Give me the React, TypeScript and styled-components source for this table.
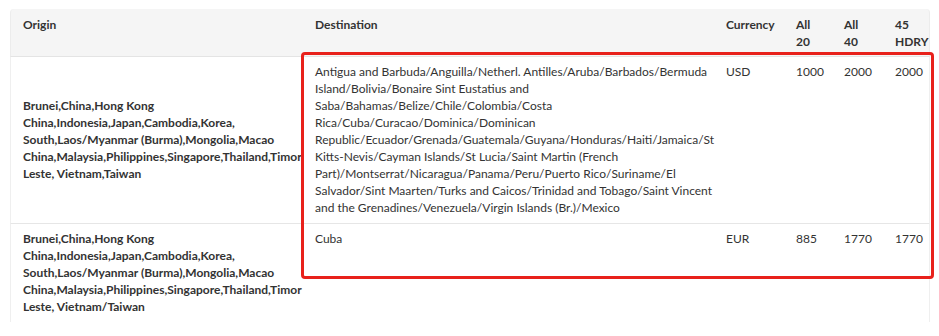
import React from "react";
import styled, { createGlobalStyle } from "styled-components";

const Global = createGlobalStyle`
  html, body { margin: 0; padding: 0; background: #ffffff; }
  body { font-family: Lato, "Liberation Sans", Arial, sans-serif; color: #333333; }
`;

const Page = styled.div`
  padding: 9px 9px 0 10px;
  width: 920px;
`;

const Frame = styled.div`
  position: relative;
  width: 920px;
`;

const Table = styled.table`
  width: 920px;
  table-layout: fixed;
  border-collapse: separate;
  border-spacing: 0;
  font-size: 12px;
  line-height: 17px;
  color: #333333;
`;

const HeadCell = styled.th<{ $first?: boolean; $last?: boolean }>`
  background: #f5f5f5;
  text-align: left;
  vertical-align: top;
  font-weight: 700;
  padding: 7px 12px 6px 12px;
  height: 34px;
  border-bottom: 1px solid #e4e4e4;
  border-left: ${(p) => (p.$first ? "1px solid #ececec" : "none")};
  border-right: ${(p) => (p.$last ? "1px solid #ececec" : "none")};
  border-top-left-radius: ${(p) => (p.$first ? "4px" : "0")};
  border-top-right-radius: ${(p) => (p.$last ? "4px" : "0")};
`;

const Cell = styled.td<{ $first?: boolean; $last?: boolean; $middle?: boolean; $bold?: boolean; $divider?: boolean }>`
  vertical-align: ${(p) => (p.$middle ? "middle" : "top")};
  font-weight: ${(p) => (p.$bold ? 700 : 400)};
  padding: 6px 12px 7px 12px;
  border-bottom: ${(p) => (p.$divider ? "1px solid #e6e6e6" : "none")};
  border-left: ${(p) => (p.$first ? "1px solid #efefef" : "none")};
  border-right: ${(p) => (p.$last ? "1px solid #efefef" : "none")};
`;

const Line = styled.span`
  display: block;
  white-space: nowrap;
`;

const Highlight = styled.div`
  position: absolute;
  left: 291px;
  top: 43px;
  width: 633px;
  height: 227px;
  box-sizing: border-box;
  border: 3.5px solid #e8211b;
  border-radius: 4px;
  pointer-events: none;
`;

const originLines = [
  "Brunei,China,Hong Kong",
  "China,Indonesia,Japan,Cambodia,Korea,",
  "South,Laos/Myanmar (Burma),Mongolia,Macao",
  "China,Malaysia,Philippines,Singapore,Thailand,Timor",
];

const destLines = [
  "Antigua and Barbuda/Anguilla/Netherl. Antilles/Aruba/Barbados/Bermuda",
  "Island/Bolivia/Bonaire Sint Eustatius and",
  "Saba/Bahamas/Belize/Chile/Colombia/Costa",
  "Rica/Cuba/Curacao/Dominica/Dominican",
  "Republic/Ecuador/Grenada/Guatemala/Guyana/Honduras/Haiti/Jamaica/St",
  "Kitts-Nevis/Cayman Islands/St Lucia/Saint Martin (French",
  "Part)/Montserrat/Nicaragua/Panama/Peru/Puerto Rico/Suriname/El",
  "Salvador/Sint Maarten/Turks and Caicos/Trinidad and Tobago/Saint Vincent",
  "and the Grenadines/Venezuela/Virgin Islands (Br.)/Mexico",
];

const rows = [
  {
    origin: [...originLines, "Leste, Vietnam,Taiwan"],
    dest: destLines,
    currency: "USD",
    a20: "1000",
    a40: "2000",
    hdry: "2000",
    middle: true,
  },
  {
    origin: [...originLines, "Leste, Vietnam/Taiwan"],
    dest: ["Cuba"],
    currency: "EUR",
    a20: "885",
    a40: "1770",
    hdry: "1770",
    middle: false,
  },
];

export default function App() {
  return (
    <>
      <Global />
      <Page>
        <Frame>
          <Table>
            <colgroup>
              <col style={{ width: 293 }} />
              <col style={{ width: 411 }} />
              <col style={{ width: 70 }} />
              <col style={{ width: 48 }} />
              <col style={{ width: 51 }} />
              <col style={{ width: 47 }} />
            </colgroup>
            <thead>
              <tr>
                <HeadCell $first>Origin</HeadCell>
                <HeadCell>Destination</HeadCell>
                <HeadCell>Currency</HeadCell>
                <HeadCell>
                  <Line>All</Line>
                  <Line>20</Line>
                </HeadCell>
                <HeadCell>
                  <Line>All</Line>
                  <Line>40</Line>
                </HeadCell>
                <HeadCell $last>
                  <Line>45</Line>
                  <Line>HDRY</Line>
                </HeadCell>
              </tr>
            </thead>
            <tbody>
              {rows.map((r, i) => {
                const divider = i < rows.length - 1;
                return (
                  <tr key={i}>
                    <Cell $first $bold $middle={r.middle} $divider={divider}>
                      {r.origin.map((l) => (
                        <Line key={l}>{l}</Line>
                      ))}
                    </Cell>
                    <Cell $divider={divider}>
                      {r.dest.map((l) => (
                        <Line key={l}>{l}</Line>
                      ))}
                    </Cell>
                    <Cell $divider={divider}>{r.currency}</Cell>
                    <Cell $divider={divider}>{r.a20}</Cell>
                    <Cell $divider={divider}>{r.a40}</Cell>
                    <Cell $last $divider={divider}>{r.hdry}</Cell>
                  </tr>
                );
              })}
            </tbody>
          </Table>
          <Highlight />
        </Frame>
      </Page>
    </>
  );
}
